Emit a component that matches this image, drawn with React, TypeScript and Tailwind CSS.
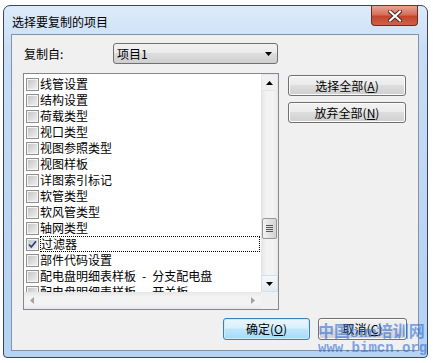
import React from "react";

const items = [
  "线管设置",
  "结构设置",
  "荷载类型",
  "视口类型",
  "视图参照类型",
  "视图样板",
  "详图索引标记",
  "软管类型",
  "软风管类型",
  "轴网类型",
  "过滤器",
  "部件代码设置",
  "配电盘明细表样板\u2002-\u2002分支配电盘",
  "配电盘明细表样板\u2002-\u2002开关板",
];

const btn =
  "h-[21px] flex items-center justify-center rounded-[3px] border border-[#707070] bg-[linear-gradient(#f2f2f2_0%,#ebebeb_45%,#dddddd_50%,#cfcfcf_100%)] text-[12px] text-black leading-none shadow-[inset_0_0_0_1px_#fcfcfc]";

const CheckBox = ({ checked }: { checked?: boolean }) => (
  <div className="w-[13px] h-[13px] border border-[#8e8f8f] bg-[#f4f4f4] p-[1px] shrink-0">
    <div className="w-full h-full bg-[linear-gradient(135deg,#c6c6c6,#f0f0f0)] flex items-center justify-center">
      {checked && (
        <svg width="9" height="9" viewBox="0 0 9 9">
          <path d="M1 4.5 L3.3 7 L8 1.2" fill="none" stroke="#23408e" strokeWidth="1.7" />
        </svg>
      )}
    </div>
  </div>
);

const Hotkey = ({ label, k }: { label: string; k: string }) => (
  <span>
    {label}(<span className="underline">{k}</span>)
  </span>
);

export default function App() {
  return (
    <div className="w-[433px] h-[363px] bg-white pt-[5px] pl-[3px] relative overflow-hidden font-['Noto_Sans_CJK_SC',sans-serif]">
      <div className="w-[425px] h-[353px] border border-[#3d4654] rounded-t-[7px] rounded-b-[4px] bg-[linear-gradient(180deg,#dcebfa_0%,#c9def5_12%,#bcd6f3_60%,#b5d3f4_100%)] flex flex-col">
        {/* title bar */}
        <div className="h-[28px] flex items-start">
          <div className="pl-[8px] pt-[8px] text-[12px] leading-[16px] text-black">选择要复制的项目</div>
          <div className="ml-auto mr-[9px] w-[47px] h-[20px] rounded-b-[4px] border border-t-0 border-[#6b2a22] bg-[linear-gradient(#e8a493_0%,#d6705a_45%,#c4452c_55%,#d0624a_100%)] flex items-center justify-center">
            <svg width="14" height="12" viewBox="0 0 14 12">
              <path d="M2 1.5 L12 10.5 M12 1.5 L2 10.5" stroke="#4a2a26" strokeWidth="4" strokeLinecap="square" />
              <path d="M2 1.5 L12 10.5 M12 1.5 L2 10.5" stroke="#ffffff" strokeWidth="2" strokeLinecap="square" />
            </svg>
          </div>
        </div>

        {/* client area */}
        <div className="ml-[7px] w-[408px] h-[317px] border border-[#7f93ad] bg-[#f0f0f0] text-[12px] text-black">
          <div className="flex items-center pl-[12px] pt-[8px]">
            <div className="w-[89px] leading-[16px]">复制自:</div>
            <div className="w-[165px] h-[21px] rounded-[3px] border border-[#707070] bg-[linear-gradient(#f2f2f2_0%,#ebebeb_45%,#dddddd_50%,#cfcfcf_100%)] flex items-center pl-[3px] pr-[5px]">
              <span className="leading-none">项目1</span>
              <svg className="ml-auto" width="7" height="4" viewBox="0 0 7 4">
                <path d="M0 0 H7 L3.5 4 Z" fill="#000" />
              </svg>
            </div>
          </div>

          <div className="flex mt-[9px] pl-[11px]">
            {/* list box */}
            <div className="w-[256px] h-[237px] border border-[#828790] bg-white flex flex-col">
              <div className="flex h-[218px]">
                <div className="flex-1 overflow-hidden pt-[2px] pl-[2px]">
                  {items.map((t, i) => (
                    <div key={t} className="h-[16px] flex items-center">
                      <CheckBox checked={i === 10} />
                      <div
                        className={
                          "ml-[1px] h-[16px] flex items-center whitespace-pre leading-none " +
                          (i === 10 ? "flex-1 border border-dotted border-black mr-[1px]" : "")
                        }
                      >
                        {t}
                      </div>
                    </div>
                  ))}
                </div>
                {/* vertical scrollbar */}
                <div className="w-[17px] bg-[linear-gradient(90deg,#e4e4e4,#f3f3f3_30%,#f3f3f3_70%,#e8e8e8)] flex flex-col">
                  <div className="h-[17px] flex items-center justify-center border border-[#e6e6e6] bg-[#f0f0f0]">
                    <svg width="7" height="4" viewBox="0 0 7 4">
                      <path d="M0 4 H7 L3.5 0 Z" fill="#000" />
                    </svg>
                  </div>
                  <div className="h-[127px]" />
                  <div className="mx-[1px] h-[21px] rounded-[2px] border border-[#969696] bg-[linear-gradient(90deg,#f3f3f3,#e2e2e2_50%,#d3d3d3)] flex flex-col items-center justify-center gap-[1px]">
                    <div className="w-[7px] h-[1px] bg-[#555]" />
                    <div className="w-[7px] h-[1px] bg-[#555]" />
                    <div className="w-[7px] h-[1px] bg-[#555]" />
                    <div className="w-[7px] h-[1px] bg-[#555]" />
                  </div>
                  <div className="flex-1" />
                  <div className="h-[17px] flex items-center justify-center border border-[#d6dee6] bg-[linear-gradient(#f4f8fb,#e3ebf2)]">
                    <svg width="7" height="4" viewBox="0 0 7 4">
                      <path d="M0 0 H7 L3.5 4 Z" fill="#000" />
                    </svg>
                  </div>
                </div>
              </div>
              {/* horizontal scrollbar */}
              <div className="flex h-[17px]">
                <div className="flex-1 bg-[linear-gradient(#e6e6e6,#f3f3f3_30%,#f3f3f3_70%,#e8e8e8)] flex items-center justify-between px-[6px]">
                  <svg width="4" height="7" viewBox="0 0 4 7">
                    <path d="M4 0 V7 L0 3.5 Z" fill="#a3a3a3" />
                  </svg>
                  <svg width="4" height="7" viewBox="0 0 4 7">
                    <path d="M0 0 V7 L4 3.5 Z" fill="#a3a3a3" />
                  </svg>
                </div>
                <div className="w-[17px] bg-[#f0f0f0]" />
              </div>
            </div>

            <div className="ml-[9px] mt-[2px] flex flex-col gap-[6px]">
              <div className={btn + " w-[118px]"}>
                <Hotkey label="选择全部" k="A" />
              </div>
              <div className={btn + " w-[118px]"}>
                <Hotkey label="放弃全部" k="N" />
              </div>
            </div>
          </div>

          <div className="flex justify-end gap-[8px] pr-[11px] mt-[8px]">
            <div className="w-[87px] h-[22px] flex items-center justify-center rounded-[3px] border border-[#3c7fb1] bg-[linear-gradient(#eaf6fd_0%,#d9f0fc_45%,#bee6fd_50%,#a7d9f5_100%)] shadow-[inset_0_0_0_1px_#cdeaf8] leading-none">
              <Hotkey label="确定" k="O" />
            </div>
            <div className={btn + " w-[89px] h-[22px]"}>
              <Hotkey label="取消" k="C" />
            </div>
          </div>
        </div>
      </div>

      {/* watermark */}
      <div className="absolute left-[318px] top-[324px] text-[#2f6fd6] opacity-60 pointer-events-none leading-none whitespace-nowrap">
        <div className="text-[16px] font-bold font-['Liberation_Serif','Noto_Sans_CJK_SC',serif]">中国bim培训网</div>
        <div className="text-[14px] font-bold mt-[1px] font-['Liberation_Mono',monospace]">www.bimcn.org</div>
      </div>
    </div>
  );
}
